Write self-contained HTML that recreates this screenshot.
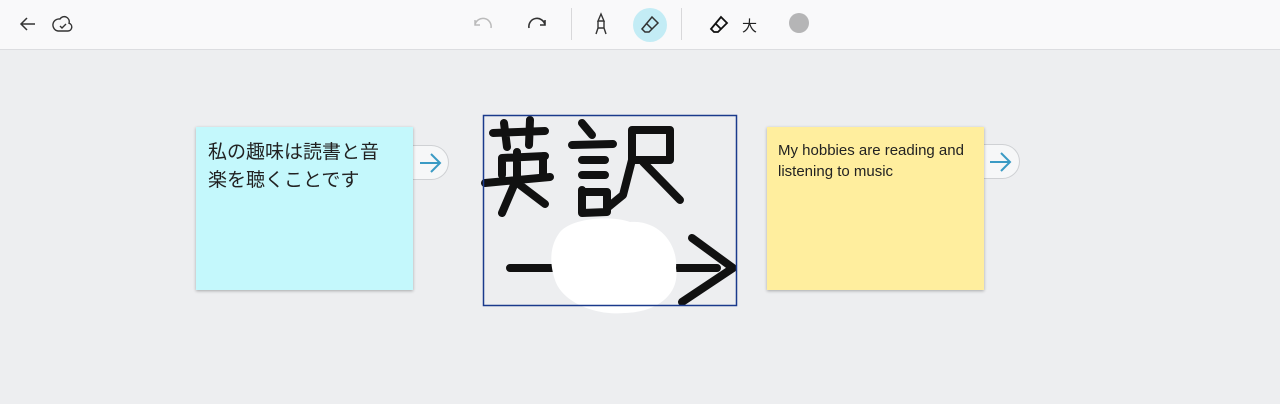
<!DOCTYPE html>
<html><head><meta charset="utf-8">
<style>
*{margin:0;padding:0;box-sizing:border-box}
body{width:1280px;height:404px;background:#edeef0;font-family:"Liberation Sans","Noto Sans CJK JP",sans-serif;position:relative;overflow:hidden}
.tb{position:absolute;left:0;top:0;width:1280px;height:50px;background:#f9f9fa;border-bottom:1px solid #dcdde0}
.tb svg{position:absolute}
.sep{position:absolute;top:8px;width:1px;height:32px;background:#d8d8da}
.note{position:absolute;box-shadow:0 1px 3px rgba(0,0,0,.3)}
.tab{position:absolute;width:36px;height:35px;background:#f6f7f8;border:1px solid #cfd1d4;border-left:none;border-radius:0 18px 18px 0}
</style></head><body>
<div class="tb">
 <svg style="left:18px;top:14px" width="20" height="20" viewBox="0 0 20 20" fill="none" stroke="#333" stroke-width="1.5"><path d="M17 10H3M9 4L3 10l6 6"/></svg>
 <svg style="left:52px;top:13px" width="22" height="22" viewBox="0 0 22 22" fill="none" stroke="#333" stroke-width="1.4"><path d="M6 18h10a4 4 0 0 0 1-7.8A5 5 0 0 0 8 6a4 4 0 0 0-2 12z"/><path d="M8 13l2 2 4-4"/></svg>
 <svg style="left:472px;top:14px" width="22" height="20" viewBox="0 0 22 20" fill="none" stroke="#bbb" stroke-width="1.5"><path d="M3 6v5h5M3 11a8 8 0 0 1 16 3"/></svg>
 <svg style="left:526px;top:14px" width="22" height="20" viewBox="0 0 22 20" fill="none" stroke="#333" stroke-width="1.6"><path d="M19 6v5h-5M19 11a8 8 0 0 0-16 3"/></svg>
 <div class="sep" style="left:571px"></div>
 <svg style="left:592px;top:12px" width="18" height="24" viewBox="0 0 18 24" fill="none" stroke="#333" stroke-width="1.4"><path d="M9 2L6 9h6zM6 9v7h6V9M6 16l-2 6M12 16l2 6"/></svg>
 <div style="position:absolute;left:633px;top:8px;width:34px;height:34px;border-radius:50%;background:#c3ecf5"></div>
 <svg style="left:639px;top:14px" width="22" height="22" viewBox="0 0 22 22" fill="none" stroke="#333" stroke-width="1.5"><path d="M13 3l6 6-9 9H6l-3-3z M7 9l6 6"/></svg>
 <div class="sep" style="left:681px"></div>
 <svg style="left:708px;top:14px" width="22" height="22" viewBox="0 0 22 22" fill="none" stroke="#111" stroke-width="1.8"><path d="M13 3l6 6-9 9H6l-3-3z M7 9l6 6"/></svg>
 <div style="position:absolute;left:742px;top:15px;font-size:15px;color:#222">大</div>
 <div style="position:absolute;left:789px;top:13px;width:20px;height:20px;border-radius:50%;background:#b5b5b6"></div>
</div>

<div class="tab" style="left:413px;top:145px"></div>
<svg style="position:absolute;left:418px;top:151px" width="26" height="24" viewBox="0 0 26 24" fill="none" stroke="#3a9ac4" stroke-width="2"><path d="M2 12h20M13 3l9 9-9 9"/></svg>
<div class="note" style="left:196px;top:127px;width:217px;height:163px;background:#c4f8fc;padding:12px 0 0 12px;font-size:19px;line-height:28px;color:#222">私の趣味は読書と音<br>楽を聴くことです</div>

<div class="tab" style="left:984px;top:144px"></div>
<svg style="position:absolute;left:988px;top:150px" width="26" height="24" viewBox="0 0 26 24" fill="none" stroke="#3a9ac4" stroke-width="2"><path d="M2 12h20M13 3l9 9-9 9"/></svg>
<div class="note" style="left:767px;top:127px;width:217px;height:163px;background:#ffee9e;padding:13px 0 0 11px;font-size:15px;line-height:21px;color:#222">My hobbies are reading and<br>listening to music</div>

<svg style="position:absolute;left:0;top:0" width="1280" height="404" viewBox="0 0 1280 404">
 <g fill="none" stroke="#111" stroke-width="8" stroke-linecap="round" stroke-linejoin="round">
  <path d="M493 133L545 131M504 123L507 147M530 120L529 145"/>
  <path d="M502 158L545 156M517 152L517 178M485 183L550 177M517 178L502 213M520 185L545 204M502 158L502 175M543 156L543 175"/>
  <path d="M582 123L592 135M572 145L613 144M582 160L605 160M582 175L605 175M582 190L582 213L607 212L607 192L582 192"/>
  <path d="M632 130L670 130L670 160L632 160L632 130M632 160L623 195L607 208M643 162L680 200"/>
  <path d="M510 268L717 268M692 238L733 268L682 302"/>
 </g>
 <path d="M560 232C572 218 610 215 630 222C660 220 678 245 676 268C680 292 660 312 625 313C595 316 562 302 555 280C549 262 550 245 560 232Z" fill="#fff"/>
 <rect x="483.5" y="115.5" width="253" height="190" fill="none" stroke="#1a3a8c" stroke-width="1.5"/>
</svg>
</body></html>
